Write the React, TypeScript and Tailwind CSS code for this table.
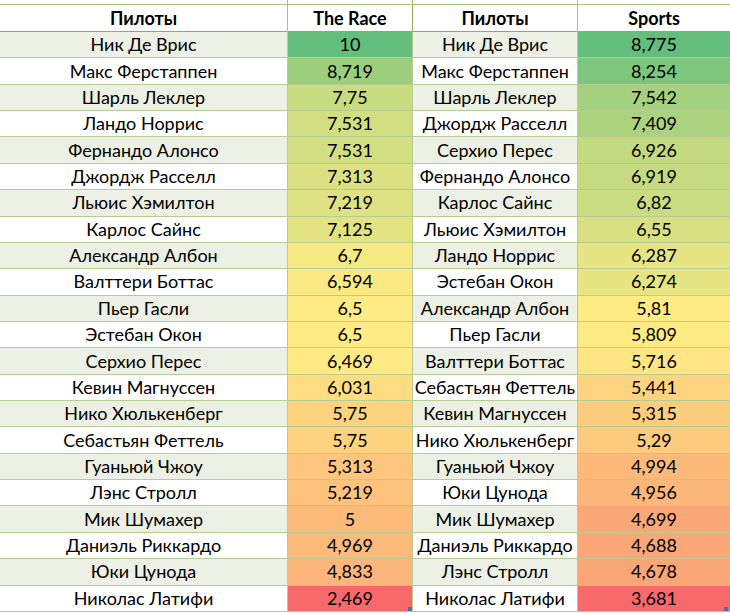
import React from 'react';

// рейтинги пилотов: The Race и Sports
const race: [string, number][] = [
  ['Ник Де Врис', 10],
  ['Макс Ферстаппен', 8.719],
  ['Шарль Леклер', 7.75],
  ['Ландо Норрис', 7.531],
  ['Фернандо Алонсо', 7.531],
  ['Джордж Расселл', 7.313],
  ['Льюис Хэмилтон', 7.219],
  ['Карлос Сайнс', 7.125],
  ['Александр Албон', 6.7],
  ['Валттери Боттас', 6.594],
  ['Пьер Гасли', 6.5],
  ['Эстебан Окон', 6.5],
  ['Серхио Перес', 6.469],
  ['Кевин Магнуссен', 6.031],
  ['Нико Хюлькенберг', 5.75],
  ['Себастьян Феттель', 5.75],
  ['Гуаньюй Чжоу', 5.313],
  ['Лэнс Стролл', 5.219],
  ['Мик Шумахер', 5],
  ['Даниэль Риккардо', 4.969],
  ['Юки Цунода', 4.833],
  ['Николас Латифи', 2.469],
];

const sports: [string, number][] = [
  ['Ник Де Врис', 8.775],
  ['Макс Ферстаппен', 8.254],
  ['Шарль Леклер', 7.542],
  ['Джордж Расселл', 7.409],
  ['Серхио Перес', 6.926],
  ['Фернандо Алонсо', 6.919],
  ['Карлос Сайнс', 6.82],
  ['Льюис Хэмилтон', 6.55],
  ['Ландо Норрис', 6.287],
  ['Эстебан Окон', 6.274],
  ['Александр Албон', 5.81],
  ['Пьер Гасли', 5.809],
  ['Валттери Боттас', 5.716],
  ['Себастьян Феттель', 5.441],
  ['Кевин Магнуссен', 5.315],
  ['Нико Хюлькенберг', 5.29],
  ['Гуаньюй Чжоу', 4.994],
  ['Юки Цунода', 4.956],
  ['Мик Шумахер', 4.699],
  ['Даниэль Риккардо', 4.688],
  ['Лэнс Стролл', 4.678],
  ['Николас Латифи', 3.681],
];

const RED = [248, 105, 107];
const YELLOW = [255, 235, 132];
const GREEN = [99, 190, 123];

function mix(a: number[], b: number[], t: number) {
  const c = a.map((v, i) => Math.round(v + (b[i] - v) * t));
  return `rgb(${c[0]},${c[1]},${c[2]})`;
}

// трёхцветная шкала как в Excel: мин / медиана / макс
function scale(values: number[]) {
  const sorted = [...values].sort((a, b) => a - b);
  const min = sorted[0];
  const max = sorted[sorted.length - 1];
  const n = sorted.length;
  const mid = n % 2 ? sorted[(n - 1) / 2] : (sorted[n / 2 - 1] + sorted[n / 2]) / 2;
  return (v: number) =>
    v <= mid ? mix(RED, YELLOW, (v - min) / (mid - min)) : mix(YELLOW, GREEN, (v - mid) / (max - mid));
}

const fmt = (v: number) => String(v).replace('.', ',');

export default function App() {
  const raceColor = scale(race.map((r) => r[1]));
  const sportsColor = scale(sports.map((r) => r[1]));

  return (
    <div
      className="w-[730px] h-[613px] overflow-hidden bg-white text-[18px] text-black"
      style={{ fontFamily: 'Lato, "Noto Sans", sans-serif' }}
    >
      <div className="grid grid-cols-[288px_125px_165px_152px] h-[5px] border-b border-[#a9c47f]">
        <div className="border-r border-[#a9c47f]" />
        <div className="border-r border-[#a9c47f]" />
        <div className="border-r border-[#a9c47f]" />
        <div />
      </div>
      <div className="grid grid-cols-[288px_125px_165px_152px] h-[27px] border-b border-[#8fae56] font-bold">
        <div className="flex items-center justify-center border-r border-[#a9c47f]">Пилоты</div>
        <div className="flex items-center justify-center border-r border-[#8fae56]">The Race</div>
        <div className="flex items-center justify-center border-r border-[#a9c47f]">Пилоты</div>
        <div className="flex items-center justify-center">Sports</div>
      </div>
      <div className="grid grid-cols-[288px_125px_165px_152px] auto-rows-[26.36px]">
        {race.map((r, i) => {
          const s = sports[i];
          const band = i % 2 === 0 ? 'bg-[#edf0e4]' : 'bg-white';
          const last = i === race.length - 1;
          return (
            <React.Fragment key={i}>
              <div className={`flex items-center justify-center border-r border-b border-[#b7cc92] ${band}`}>{r[0]}</div>
              <div
                className="relative flex items-center justify-center border-r border-b border-[#b7cc92]"
                style={{ backgroundColor: raceColor(r[1]) }}
              >
                {fmt(r[1])}
                {last && <span className="absolute right-0 bottom-0 w-[4px] h-[4px] bg-[#4a6fb5]" />}
              </div>
              <div className={`flex items-center justify-center border-r border-b border-[#b7cc92] ${band}`}>{s[0]}</div>
              <div
                className="relative flex items-center justify-center border-b border-[#b7cc92]"
                style={{ backgroundColor: sportsColor(s[1]) }}
              >
                {fmt(s[1])}
                {last && <span className="absolute right-[2px] bottom-0 w-[4px] h-[4px] bg-[#4a6fb5]" />}
              </div>
            </React.Fragment>
          );
        })}
      </div>
    </div>
  );
}
